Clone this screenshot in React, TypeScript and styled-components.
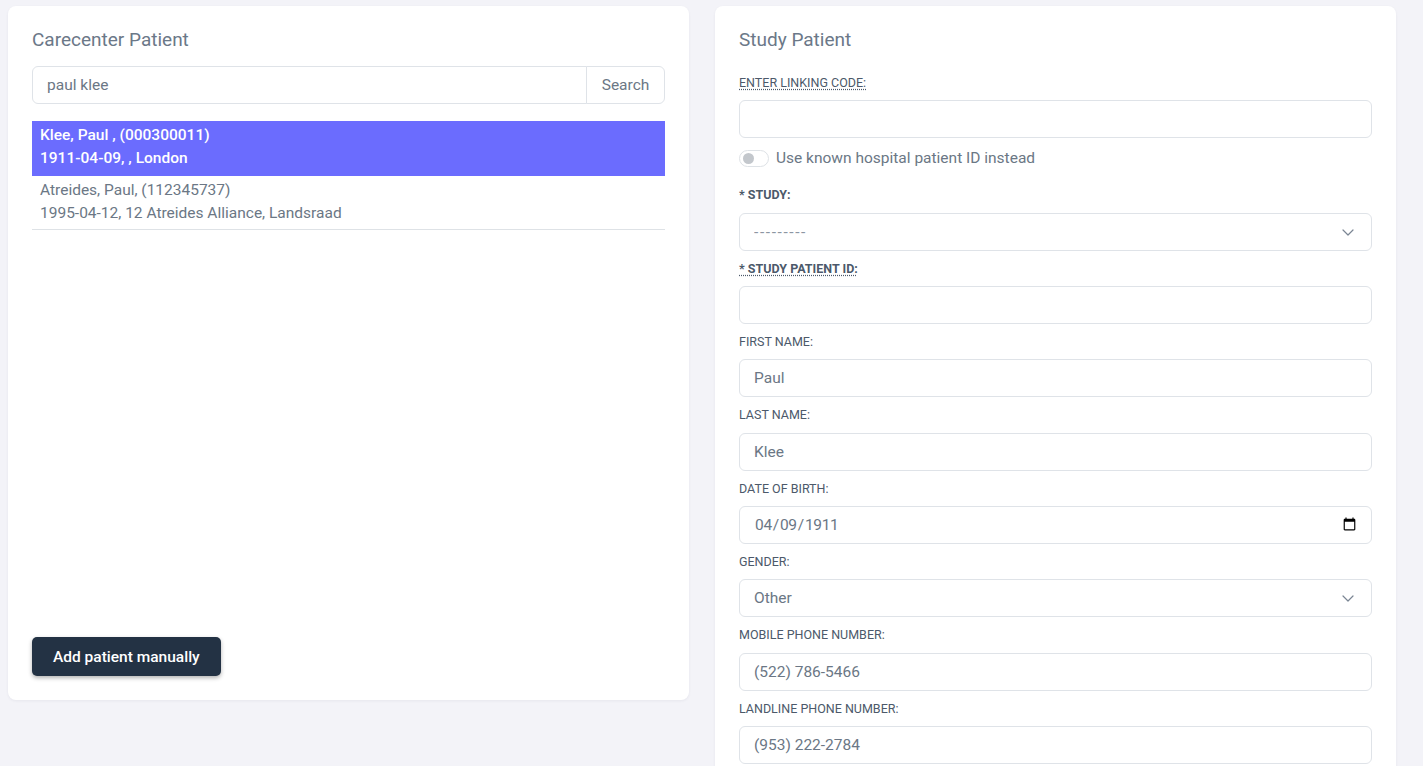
import React, { useState } from "react";
import styled, { createGlobalStyle } from "styled-components";

const GlobalStyle = createGlobalStyle`
  *, *::before, *::after { box-sizing: border-box; }
  body {
    margin: 0;
    background: #f3f3f8;
    font-family: Roboto, "Liberation Sans", Arial, sans-serif;
    color: #6b7785;
  }
`;

const Page = styled.div`
  display: grid;
  grid-template-columns: 681px 681px;
  column-gap: 26px;
  align-items: start;
  padding: 6px 0 0 8px;
`;

const Card = styled.section<{ $height?: number }>`
  background: #fff;
  border-radius: 8px;
  box-shadow: 0 1px 3px rgba(30, 40, 60, 0.06);
  padding: 24px;
  display: flex;
  flex-direction: column;
  height: ${(p) => (p.$height ? `${p.$height}px` : "auto")};
`;

const Title = styled.h2`
  margin: 0 0 15px;
  font-size: 19px;
  line-height: 20px;
  font-weight: 400;
  color: #6b7888;
`;

const SearchGroup = styled.div`
  display: flex;
  margin-top: 1px;
`;

const SearchInput = styled.input`
  flex: 1;
  height: 38px;
  border: 1px solid #dfe3e8;
  border-radius: 6px 0 0 6px;
  padding: 0 14px;
  font: inherit;
  font-size: 15.5px;
  color: #6b7785;
  outline: none;
`;

const SearchButton = styled.button`
  height: 38px;
  width: 79px;
  margin-left: -1px;
  border: 1px solid #dfe3e8;
  border-radius: 0 6px 6px 0;
  background: #fff;
  font: inherit;
  font-size: 15.5px;
  color: #6b7785;
`;

const ResultList = styled.ul`
  list-style: none;
  margin: 17px 0 0;
  padding: 0;
`;

const ResultItem = styled.li<{ $active?: boolean }>`
  padding: 3px 8px 4.5px;
  font-size: 15.5px;
  line-height: 23px;
  border-bottom: 1px solid ${(p) => (p.$active ? "#6b6cfe" : "#dee2e6")};
  background: ${(p) => (p.$active ? "#6b6cfe" : "transparent")};
  color: ${(p) => (p.$active ? "#fff" : "#6b7785")};
  font-weight: ${(p) => (p.$active ? 500 : 400)};
  cursor: pointer;
`;

const AddButton = styled.button`
  margin-top: auto;
  align-self: flex-start;
  height: 39px;
  padding: 0 21px;
  border: none;
  border-radius: 5px;
  background: #233244;
  color: #fff;
  font: inherit;
  font-size: 15.5px;
  font-weight: 500;
  box-shadow: 0 2px 4px rgba(0, 0, 0, 0.3);
`;

const Label = styled.label<{ $strong?: boolean; $dotted?: boolean }>`
  display: block;
  margin: 9px 0;
  font-size: 12.5px;
  line-height: 17.33px;
  text-transform: uppercase;
  color: #4c596a;
  font-weight: ${(p) => (p.$strong ? 700 : 400)};
  text-decoration: ${(p) => (p.$dotted ? "underline dotted" : "none")};
  text-underline-offset: 2px;
`;

const TextInput = styled.input`
  display: block;
  width: 100%;
  height: 38px;
  border: 1px solid #dfe3e8;
  border-radius: 6px;
  padding: 0 14px;
  font: inherit;
  font-size: 15.5px;
  color: #6b7785;
  background: #fff;
  outline: none;

  &::-webkit-datetime-edit-fields-wrapper {
    letter-spacing: -0.3px;
  }

  &::-webkit-calendar-picker-indicator {
    margin-right: -2px;
  }
`;

const SelectWrap = styled.div`
  position: relative;
`;

const Select = styled.select<{ $empty?: boolean }>`
  display: block;
  width: 100%;
  height: 38px;
  border: 1px solid #dfe3e8;
  border-radius: 6px;
  padding: 0 40px 0 14px;
  font: inherit;
  font-size: 15.5px;
  color: ${(p) => (p.$empty ? "#8c96a2" : "#6b7785")};
  letter-spacing: ${(p) => (p.$empty ? "1.6px" : "normal")};
  background: #fff;
  appearance: none;
  outline: none;
`;

const Chevron = styled.svg`
  position: absolute;
  right: 18px;
  top: 16px;
  pointer-events: none;
`;

const ToggleRow = styled.label`
  display: flex;
  align-items: center;
  gap: 7px;
  height: 20px;
  margin: 10px 0 9px;
  font-size: 15.5px;
  color: #6b7785;
`;

const Switch = styled.span<{ $on: boolean }>`
  position: relative;
  width: 30px;
  height: 17px;
  border: 1px solid #dee2e6;
  border-radius: 9px;
  background: ${(p) => (p.$on ? "#6b6cfe" : "#fff")};

  &::after {
    content: "";
    position: absolute;
    top: 2px;
    left: ${(p) => (p.$on ? "15px" : "3px")};
    width: 11px;
    height: 11px;
    border-radius: 50%;
    background: ${(p) => (p.$on ? "#fff" : "#c3c7cc")};
  }
`;

const patients = [
  { name: "Klee, Paul , (000300011)", info: "1911-04-09, , London" },
  { name: "Atreides, Paul, (112345737)", info: "1995-04-12, 12 Atreides Alliance, Landsraad" },
];

const ChevronDown = () => (
  <Chevron width="12" height="7" viewBox="0 0 12 7" fill="none">
    <path d="M1 1l5 5 5-5" stroke="#7a8593" strokeWidth="1.2" strokeLinecap="round" strokeLinejoin="round" />
  </Chevron>
);

export default function App() {
  const [selected, setSelected] = useState(0);
  const [useHospitalId, setUseHospitalId] = useState(false);
  const [study, setStudy] = useState("");

  return (
    <>
      <GlobalStyle />
      <Page>
        <Card $height={694}>
          <Title>Carecenter Patient</Title>
          <SearchGroup>
            <SearchInput defaultValue="paul klee" />
            <SearchButton>Search</SearchButton>
          </SearchGroup>
          <ResultList>
            {patients.map((p, i) => (
              <ResultItem key={p.name} $active={i === selected} onClick={() => setSelected(i)}>
                <div>{p.name}</div>
                <div>{p.info}</div>
              </ResultItem>
            ))}
          </ResultList>
          <AddButton>Add patient manually</AddButton>
        </Card>

        <Card>
          <Title>Study Patient</Title>

          <Label $dotted>Enter linking code:</Label>
          <TextInput />

          <ToggleRow onClick={() => setUseHospitalId((v) => !v)}>
            <Switch $on={useHospitalId} />
            Use known hospital patient ID instead
          </ToggleRow>

          <Label $strong>* Study:</Label>
          <SelectWrap>
            <Select value={study} $empty={study === ""} onChange={(e) => setStudy(e.target.value)}>
              <option value="">---------</option>
            </Select>
            <ChevronDown />
          </SelectWrap>

          <Label $strong $dotted>* Study patient ID:</Label>
          <TextInput />

          <Label>First name:</Label>
          <TextInput defaultValue="Paul" />

          <Label>Last name:</Label>
          <TextInput defaultValue="Klee" />

          <Label>Date of birth:</Label>
          <TextInput type="date" defaultValue="1911-04-09" />

          <Label>Gender:</Label>
          <SelectWrap>
            <Select defaultValue="other">
              <option value="male">Male</option>
              <option value="female">Female</option>
              <option value="other">Other</option>
            </Select>
            <ChevronDown />
          </SelectWrap>

          <Label>Mobile phone number:</Label>
          <TextInput defaultValue="(522) 786-5466" />

          <Label>Landline phone number:</Label>
          <TextInput defaultValue="(953) 222-2784" />
        </Card>
      </Page>
    </>
  );
}
